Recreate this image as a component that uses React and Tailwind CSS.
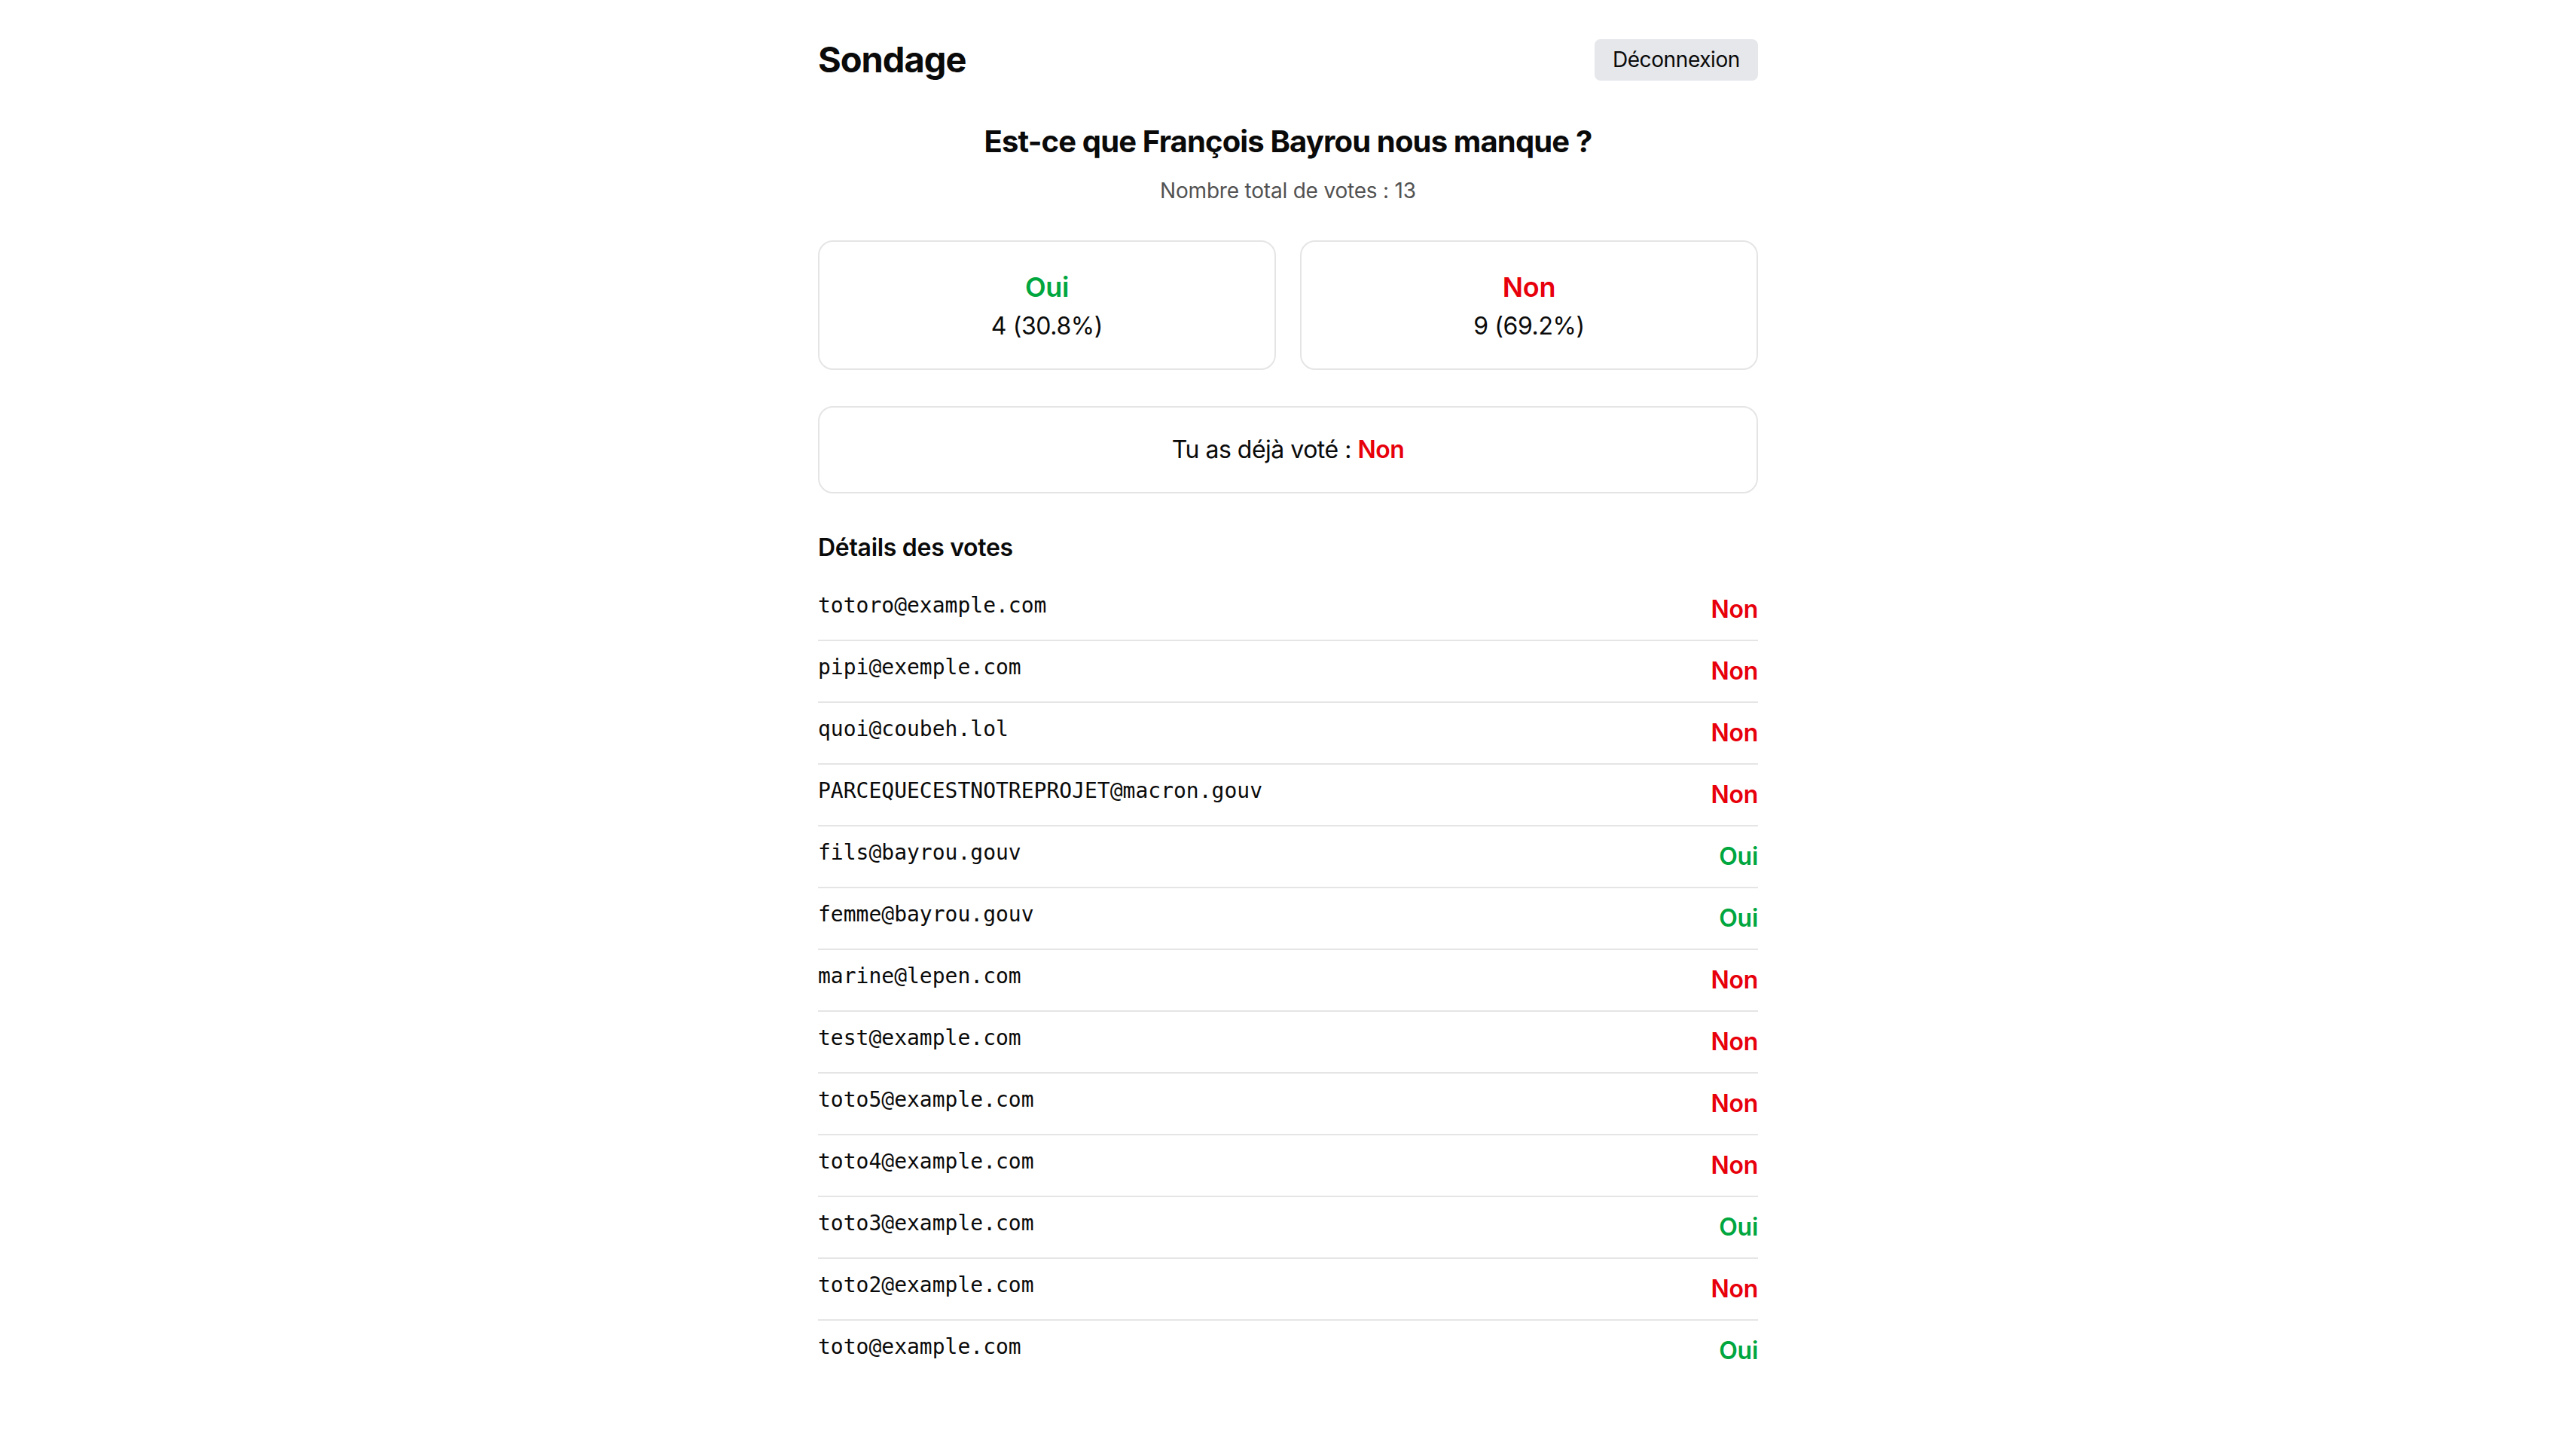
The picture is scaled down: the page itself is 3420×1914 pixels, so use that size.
import React from "react";

const votes = [
  ["totoro@example.com", "Non"],
  ["pipi@exemple.com", "Non"],
  ["quoi@coubeh.lol", "Non"],
  ["PARCEQUECESTNOTREPROJET@macron.gouv", "Non"],
  ["fils@bayrou.gouv", "Oui"],
  ["femme@bayrou.gouv", "Oui"],
  ["marine@lepen.com", "Non"],
  ["test@example.com", "Non"],
  ["toto5@example.com", "Non"],
  ["toto4@example.com", "Non"],
  ["toto3@example.com", "Oui"],
  ["toto2@example.com", "Non"],
  ["toto@example.com", "Oui"],
];

export default function App() {
  return (
    <div className="min-h-screen bg-white font-['Inter',sans-serif] text-[#0a0a0a]">
      <div className="mx-auto w-[1248px] pt-[47px] pb-[48px]">
        <header className="flex h-[64px] items-center justify-between mb-[49px]">
          <h1 className="text-[47px] leading-[64px] font-bold tracking-[-1px]">Sondage</h1>
          <button className="h-[55px] rounded-[8px] bg-[#e5e7eb] px-[24px] text-[28px] leading-[40px] tracking-[-0.4px] text-[#0a0a0a]">
            Déconnexion
          </button>
        </header>

        <h2 className="text-center text-[40px] leading-[56px] font-bold tracking-[-0.85px]">
          Est-ce que François Bayrou nous manque ?
        </h2>
        <p className="mt-[17px] text-center text-[28px] leading-[40px] tracking-[-0.2px] text-[#525252]">
          Nombre total de votes : 13
        </p>

        <div className="mt-[46px] grid grid-cols-2 gap-[32px]">
          <div className="rounded-[20px] border-2 border-[#e5e5e5] p-[32px] text-center">
            <div className="text-[36px] leading-[56px] font-semibold tracking-[-0.3px] text-[#00a63e]">Oui</div>
            <div className="text-[32px] leading-[48px] tracking-[-0.4px]">4 (30.8%)</div>
          </div>
          <div className="rounded-[20px] border-2 border-[#e5e5e5] p-[32px] text-center">
            <div className="text-[36px] leading-[56px] font-semibold tracking-[-0.3px] text-[#e7000b]">Non</div>
            <div className="text-[32px] leading-[48px] tracking-[-0.4px]">9 (69.2%)</div>
          </div>
        </div>

        <div className="mt-[48px] rounded-[20px] border-2 border-[#e5e5e5] p-[32px] text-center text-[32px] leading-[48px] tracking-[-0.5px]">
          Tu as déjà voté : <span className="font-semibold text-[#e7000b]">Non</span>
        </div>

        <h3 className="mt-[48px] mb-[18px] text-[32px] leading-[48px] font-semibold tracking-[-0.3px]">Détails des votes</h3>

        <ul className="divide-y-2 divide-[#e5e5e5]">
          {votes.map(([email, v]) => (
            <li key={email} className="flex items-start justify-between py-[16px]">
              <span className="font-['DejaVu_Sans_Mono',monospace] text-[28px] leading-[38px]">{email}</span>
              <span
                className={
                  "text-[32px] leading-[48px] font-semibold tracking-[-0.3px] " +
                  (v === "Oui" ? "text-[#00a63e]" : "text-[#e7000b]")
                }
              >
                {v}
              </span>
            </li>
          ))}
        </ul>
      </div>
    </div>
  );
}
